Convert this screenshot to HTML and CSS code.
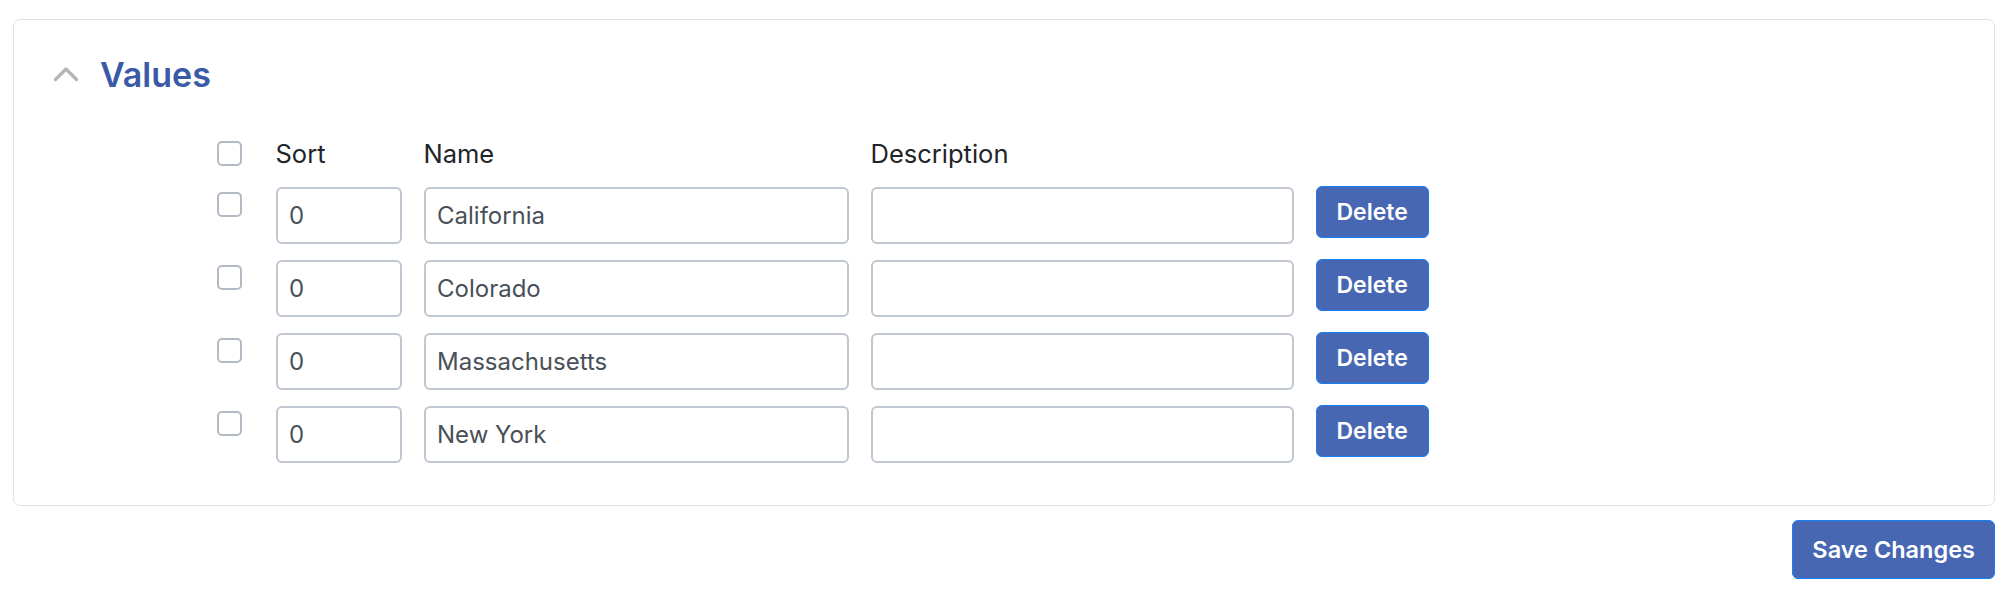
FILE: index.html
```html
<!DOCTYPE html>
<html lang="en">
<head>
<meta charset="utf-8">
<title>Values</title>
<link rel="stylesheet" href="styles.css">
</head>
<body>
<div class="page">
  <section class="card">
    <header class="card-head">
      <svg class="chev" width="26" height="16" viewBox="0 0 26 16" aria-hidden="true">
        <polyline points="2.5,13.5 13,3 23.5,13.5" fill="none" stroke="#b4b6bb" stroke-width="3.4" stroke-linecap="round" stroke-linejoin="round"/>
      </svg>
      <h2 class="title">Values</h2>
    </header>
    <div class="grid">
      <div class="cell-check head"><span class="check"></span></div>
      <div class="label">Sort</div>
      <div class="label">Name</div>
      <div class="label">Description</div>
      <div></div>

      <div class="cell-check"><span class="check"></span></div>
      <div class="input">0</div>
      <div class="input">California</div>
      <div class="input"></div>
      <div><button class="btn btn-del">Delete</button></div>

      <div class="cell-check"><span class="check"></span></div>
      <div class="input">0</div>
      <div class="input">Colorado</div>
      <div class="input"></div>
      <div><button class="btn btn-del">Delete</button></div>

      <div class="cell-check"><span class="check"></span></div>
      <div class="input">0</div>
      <div class="input">Massachusetts</div>
      <div class="input"></div>
      <div><button class="btn btn-del">Delete</button></div>

      <div class="cell-check"><span class="check"></span></div>
      <div class="input">0</div>
      <div class="input">New York</div>
      <div class="input"></div>
      <div><button class="btn btn-del">Delete</button></div>
    </div>
  </section>
  <div class="actions">
    <button class="btn btn-save">Save Changes</button>
  </div>
</div>
</body>
</html>
```
FILE: styles.css
```css
* { box-sizing: border-box; }
html, body { margin: 0; padding: 0; background: #fff; }
body { font-family: Inter, "Noto Sans", sans-serif; color: #212529; }

.page { padding: 19px 21px 0 13px; }

.card {
  border: 1.5px solid #dce1e9;
  border-radius: 7px;
  padding: 32.5px 0 42px 0;
}

.card-head {
  display: flex;
  align-items: center;
  padding-left: 39px;
  height: 44px;
  gap: 21px;
}
.chev { display: block; margin-top: -2px; }
.title {
  margin: 0;
  font-size: 34px;
  line-height: 44px;
  font-weight: 600;
  color: #3a5aa7;
}

.grid {
  margin-top: 39px;
  margin-left: 202.5px;
  display: grid;
  grid-template-columns: 37px 126px 425px 423px auto;
  grid-template-rows: 35px;
  grid-auto-rows: 57px;
  column-gap: 22px;
  row-gap: 16px;
}

.label {
  font-size: 25.5px;
  line-height: 35px;
  color: #212529;
}

.cell-check { display: flex; align-items: flex-start; padding-top: 5px; }
.cell-check.head { align-items: center; padding-top: 0; }
.check {
  display: block;
  width: 25px;
  height: 25px;
  border: 2px solid #b4bac4;
  border-radius: 5px;
  background: #fff;
}

.input {
  border: 2px solid #c1c7d1;
  border-radius: 6px;
  height: 57px;
  padding: 0 11.5px;
  display: flex;
  align-items: center;
  font-size: 24px;
  color: #495057;
}

.btn {
  font-family: Inter, "Noto Sans", sans-serif;
  font-weight: 600;
  color: #fff;
  background: #4767b3;
  border: 1.5px solid #157efb;
  border-radius: 6px;
  cursor: pointer;
}
.btn-del {
  margin-top: -1px;
  height: 52px;
  padding: 0 20px;
  font-size: 23px;
}

.actions {
  display: flex;
  justify-content: flex-end;
  margin-top: 14px;
}
.btn-save {
  height: 59px;
  padding: 0 19px;
  font-size: 23.5px;
}
```
